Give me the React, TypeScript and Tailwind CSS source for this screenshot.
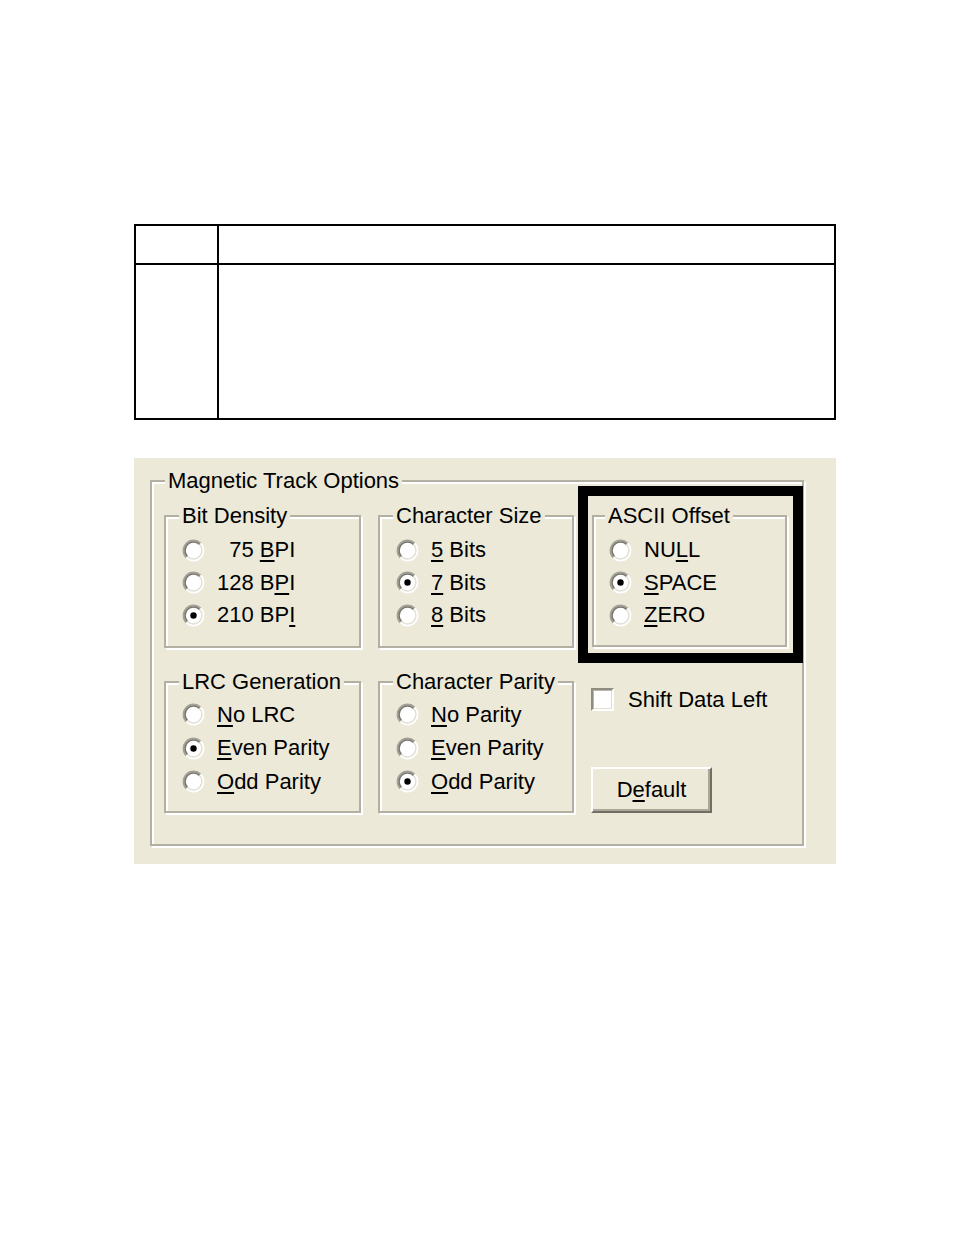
import React from "react";

function RadioIcon({ checked }: { checked?: boolean }) {
  return (
    <svg width="23" height="23" viewBox="0 0 23 23" className="shrink-0">
      <circle cx="11.5" cy="11.5" r="10" fill="#ffffff" />
      <path d="M4.43 18.57 A10 10 0 0 1 18.57 4.43" fill="none" stroke="#a3a196" strokeWidth="2" />
      <path d="M5.49 17.51 A8.5 8.5 0 0 1 17.51 5.49" fill="none" stroke="#77766e" strokeWidth="1.5" />
      <path d="M18.57 4.43 A10 10 0 0 1 4.43 18.57" fill="none" stroke="#ffffff" strokeWidth="2" />
      <path d="M17.51 5.49 A8.5 8.5 0 0 1 5.49 17.51" fill="none" stroke="#e2dfd3" strokeWidth="1.5" />
      {checked && <circle cx="11.5" cy="11.5" r="3.2" fill="#000000" />}
    </svg>
  );
}

function Radio({
  checked,
  children,
  rowClass,
}: {
  checked?: boolean;
  children: React.ReactNode;
  rowClass: string;
}) {
  return (
    <div className={rowClass}>
      <RadioIcon checked={checked} />
      <span className="ml-[12px] leading-[22px] whitespace-pre">{children}</span>
    </div>
  );
}

function U({ children }: { children: React.ReactNode }) {
  return <span className="underline decoration-2 underline-offset-[3px]">{children}</span>;
}

function Legend({ children, className }: { children: React.ReactNode; className: string }) {
  return <span className={className}>{children}</span>;
}

const legend =
  "absolute -top-[12px] left-[13px] bg-[#ece9d8] px-[3px] leading-[22px] whitespace-nowrap";
const rowTop = "flex h-[32.5px] items-center";
const rowBot = "flex h-[33.5px] items-center";

export default function App() {
  return (
    <div className="min-h-[1235px] w-[954px] bg-white pl-[134px] pt-[224px] font-['Liberation_Sans',Arial,sans-serif] text-[22px] text-black">
      {/* Table */}
      <div className="w-[702px] border-2 border-black">
        <div className="flex h-[39px] border-b-2 border-black">
          <div className="w-[83px] border-r-2 border-black" />
          <div className="flex-1" />
        </div>
        <div className="flex h-[153px]">
          <div className="w-[83px] border-r-2 border-black" />
          <div className="flex-1" />
        </div>
      </div>

      {/* Dialog panel */}
      <div className="mt-[38px] h-[406px] w-[702px] bg-[#ece9d8] pl-[16px] pt-[22px]">
        <div className="relative h-[366px] w-[654px] border-2 border-[#b3b0a3] shadow-[inset_2px_2px_0_#fff,2px_2px_0_#fff]">
          <Legend className={legend}>Magnetic Track Options</Legend>

          {/* Row 1 */}
          <div className="flex items-start">
            <div className="relative ml-[12px] mt-[33px] h-[133px] w-[197px] shrink-0 border-2 border-[#b3b0a3] pl-[16px] pt-[17px] shadow-[inset_2px_2px_0_#fff,2px_2px_0_#fff]">
              <Legend className={legend}>Bit Density</Legend>
              <Radio rowClass={rowTop}>
                {"\u2007"}75 <U>B</U>PI
              </Radio>
              <Radio rowClass={rowTop}>
                128 B<U>P</U>I
              </Radio>
              <Radio rowClass={rowTop} checked>
                210 BP<U>I</U>
              </Radio>
            </div>
            <div className="relative ml-[17px] mt-[33px] h-[133px] w-[196px] shrink-0 border-2 border-[#b3b0a3] pl-[16px] pt-[17px] shadow-[inset_2px_2px_0_#fff,2px_2px_0_#fff]">
              <Legend className={legend}>Character Size</Legend>
              <Radio rowClass={rowTop}>
                <U>5</U> Bits
              </Radio>
              <Radio rowClass={rowTop} checked>
                <U>7</U> Bits
              </Radio>
              <Radio rowClass={rowTop}>
                <U>8</U> Bits
              </Radio>
            </div>
            <div className="ml-[4px] mt-[4px] h-[177px] w-[225px] shrink-0 border-[10px] border-black pl-[4px] pt-[19px]">
              <div className="relative h-[132px] w-[195px] border-2 border-[#b3b0a3] pl-[15px] pt-[17px] shadow-[inset_2px_2px_0_#fff,2px_2px_0_#fff]">
                <Legend className="absolute -top-[12px] left-[11px] bg-[#ece9d8] px-[3px] leading-[22px] whitespace-nowrap">
                  ASCII Offset
                </Legend>
                <Radio rowClass={rowTop}>
                  NU<U>L</U>L
                </Radio>
                <Radio rowClass={rowTop} checked>
                  <U>S</U>PACE
                </Radio>
                <Radio rowClass={rowTop}>
                  <U>Z</U>ERO
                </Radio>
              </div>
            </div>
          </div>

          {/* Row 2 */}
          <div className="mt-[18px] flex items-start">
            <div className="relative ml-[12px] h-[132px] w-[197px] shrink-0 border-2 border-[#b3b0a3] pl-[16px] pt-[15px] shadow-[inset_2px_2px_0_#fff,2px_2px_0_#fff]">
              <Legend className={legend}>LRC Generation</Legend>
              <Radio rowClass={rowBot}>
                <U>N</U>o LRC
              </Radio>
              <Radio rowClass={rowBot} checked>
                <U>E</U>ven Parity
              </Radio>
              <Radio rowClass={rowBot}>
                <U>O</U>dd Parity
              </Radio>
            </div>
            <div className="relative ml-[17px] h-[132px] w-[196px] shrink-0 border-2 border-[#b3b0a3] pl-[16px] pt-[15px] shadow-[inset_2px_2px_0_#fff,2px_2px_0_#fff]">
              <Legend className={legend}>Character Parity</Legend>
              <Radio rowClass={rowBot}>
                <U>N</U>o Parity
              </Radio>
              <Radio rowClass={rowBot}>
                <U>E</U>ven Parity
              </Radio>
              <Radio rowClass={rowBot} checked>
                <U>O</U>dd Parity
              </Radio>
            </div>
            <div className="ml-[17px] flex flex-col items-start">
              <div className="mt-[7px] flex items-center">
                <div className="h-[23px] w-[23px] shrink-0 border-2 border-t-[#8f8d80] border-l-[#8f8d80] border-b-white border-r-white bg-white shadow-[inset_1px_1px_0_#b9b7aa,inset_-1px_-1px_0_#e2dfd3]" />
                <span className="ml-[14px] leading-[22px] whitespace-nowrap">Shift Data Left</span>
              </div>
              <div className="mt-[56px] flex h-[46px] w-[121px] items-center justify-center border-2 border-t-white border-l-white border-b-[#716f64] border-r-[#716f64] bg-[#ece9d8] shadow-[inset_-2px_-2px_0_#aca899]">
                <span className="leading-[22px]">
                  D<U>e</U>fault
                </span>
              </div>
            </div>
          </div>
        </div>
      </div>
    </div>
  );
}
